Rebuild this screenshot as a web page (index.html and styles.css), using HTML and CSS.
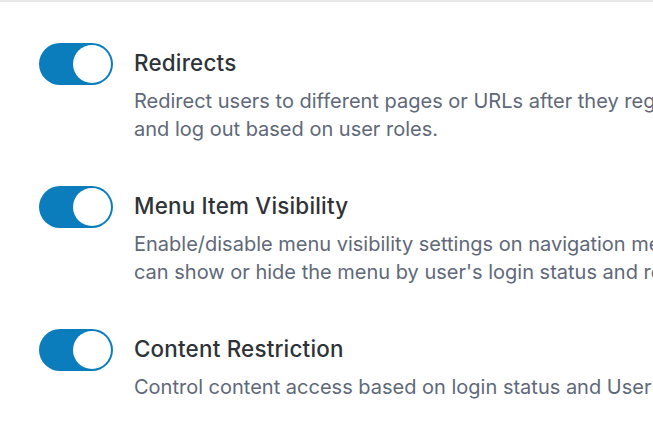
FILE: index.html
```html
<!DOCTYPE html>
<html>
<head>
<meta charset="utf-8">
<link rel="stylesheet" href="styles.css">
</head>
<body>
<div class="panel">
  <div class="item">
    <span class="toggle on"><span class="knob"></span></span>
    <div class="text">
      <div class="title">Redirects</div>
      <div class="desc">Redirect users to different pages or URLs after they register, log in, and log out based on user roles.</div>
    </div>
  </div>
  <div class="item">
    <span class="toggle on"><span class="knob"></span></span>
    <div class="text">
      <div class="title">Menu Item Visibility</div>
      <div class="desc">Enable/disable menu visibility settings on navigation menu items. You can show or hide the menu by user's login status and roles.</div>
    </div>
  </div>
  <div class="item">
    <span class="toggle on"><span class="knob"></span></span>
    <div class="text">
      <div class="title">Content Restriction</div>
      <div class="desc">Control content access based on login status and User roles.</div>
    </div>
  </div>
</div>
</body>
</html>
```
FILE: styles.css
```css
html, body {
  margin: 0;
  padding: 0;
  background: #ffffff;
  overflow: hidden;
}
body {
  font-family: Inter, "Noto Sans", sans-serif;
  width: 653px;
  height: 435px;
}
.panel {
  border-top: 2px solid #e8e8ea;
  width: 860px;
  padding: 41px 0 0 39px;
  display: flex;
  flex-direction: column;
  gap: 43px;
}
.item {
  display: flex;
  gap: 21px;
  align-items: flex-start;
}
.toggle {
  flex: none;
  width: 74px;
  height: 42px;
  border-radius: 21px;
  background: #0b7dbd;
  position: relative;
}
.knob {
  position: absolute;
  right: 2px;
  top: 2px;
  width: 38px;
  height: 38px;
  border-radius: 50%;
  background: #fff;
}
.text {
  width: 660px;
  min-height: 100px;
}
.title {
  font-size: 22.4px;
  font-weight: 500;
  letter-spacing: 0.2px;
  color: #2f3337;
  line-height: 30px;
  margin-top: 5px;
}
.desc {
  font-size: 20px;
  color: #606879;
  line-height: 28px;
  margin-top: 9px;
}
```
